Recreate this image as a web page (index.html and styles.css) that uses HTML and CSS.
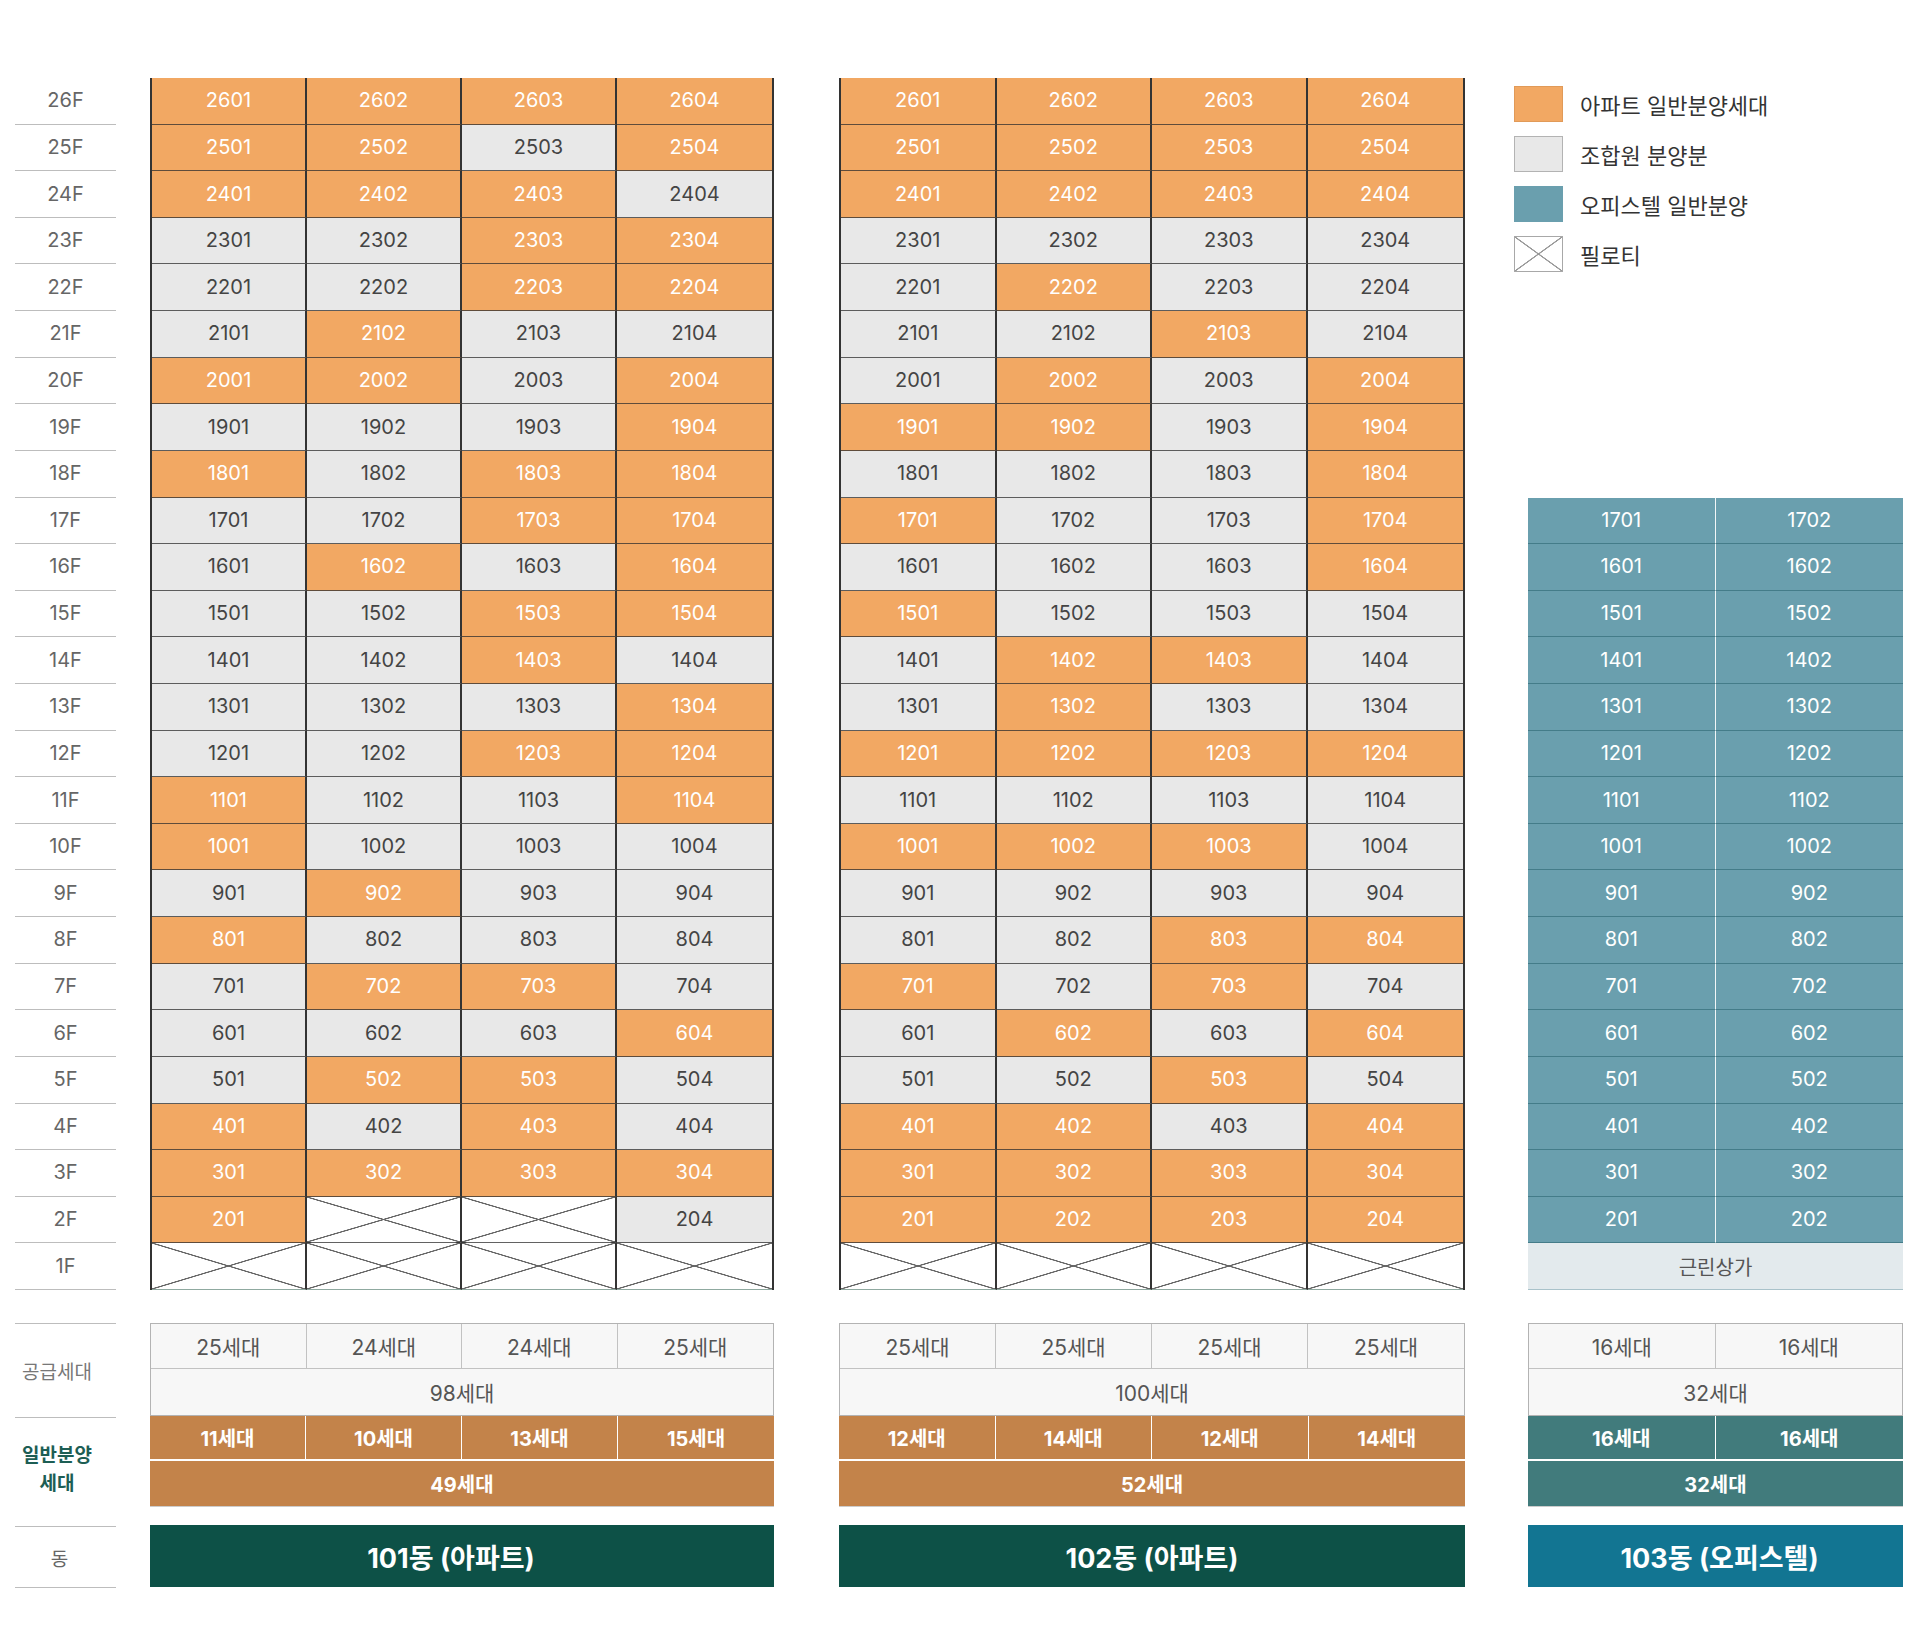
FILE: index.html
```html
<!DOCTYPE html>
<html lang="ko">
<head>
<meta charset="utf-8">
<title>동호배치도</title>
<link rel="stylesheet" href="styles.css">
</head>
<body>
<div class="page">
  <div class="top">
    <div class="floors">
      <div class="floor">26F</div><div class="floor">25F</div><div class="floor">24F</div><div class="floor">23F</div>
      <div class="floor">22F</div><div class="floor">21F</div><div class="floor">20F</div><div class="floor">19F</div>
      <div class="floor">18F</div><div class="floor">17F</div><div class="floor">16F</div><div class="floor">15F</div>
      <div class="floor">14F</div><div class="floor">13F</div><div class="floor">12F</div><div class="floor">11F</div>
      <div class="floor">10F</div><div class="floor">9F</div><div class="floor">8F</div><div class="floor">7F</div>
      <div class="floor">6F</div><div class="floor">5F</div><div class="floor">4F</div><div class="floor">3F</div>
      <div class="floor">2F</div><div class="floor">1F</div>
    </div>

    <div class="bldg b1">
      <div class="c o">2601</div><div class="c o">2602</div><div class="c o">2603</div><div class="c o">2604</div>
      <div class="c o">2501</div><div class="c o">2502</div><div class="c g">2503</div><div class="c o">2504</div>
      <div class="c o">2401</div><div class="c o">2402</div><div class="c o">2403</div><div class="c g">2404</div>
      <div class="c g">2301</div><div class="c g">2302</div><div class="c o">2303</div><div class="c o">2304</div>
      <div class="c g">2201</div><div class="c g">2202</div><div class="c o">2203</div><div class="c o">2204</div>
      <div class="c g">2101</div><div class="c o">2102</div><div class="c g">2103</div><div class="c g">2104</div>
      <div class="c o">2001</div><div class="c o">2002</div><div class="c g">2003</div><div class="c o">2004</div>
      <div class="c g">1901</div><div class="c g">1902</div><div class="c g">1903</div><div class="c o">1904</div>
      <div class="c o">1801</div><div class="c g">1802</div><div class="c o">1803</div><div class="c o">1804</div>
      <div class="c g">1701</div><div class="c g">1702</div><div class="c o">1703</div><div class="c o">1704</div>
      <div class="c g">1601</div><div class="c o">1602</div><div class="c g">1603</div><div class="c o">1604</div>
      <div class="c g">1501</div><div class="c g">1502</div><div class="c o">1503</div><div class="c o">1504</div>
      <div class="c g">1401</div><div class="c g">1402</div><div class="c o">1403</div><div class="c g">1404</div>
      <div class="c g">1301</div><div class="c g">1302</div><div class="c g">1303</div><div class="c o">1304</div>
      <div class="c g">1201</div><div class="c g">1202</div><div class="c o">1203</div><div class="c o">1204</div>
      <div class="c o">1101</div><div class="c g">1102</div><div class="c g">1103</div><div class="c o">1104</div>
      <div class="c o">1001</div><div class="c g">1002</div><div class="c g">1003</div><div class="c g">1004</div>
      <div class="c g">901</div><div class="c o">902</div><div class="c g">903</div><div class="c g">904</div>
      <div class="c o">801</div><div class="c g">802</div><div class="c g">803</div><div class="c g">804</div>
      <div class="c g">701</div><div class="c o">702</div><div class="c o">703</div><div class="c g">704</div>
      <div class="c g">601</div><div class="c g">602</div><div class="c g">603</div><div class="c o">604</div>
      <div class="c g">501</div><div class="c o">502</div><div class="c o">503</div><div class="c g">504</div>
      <div class="c o">401</div><div class="c g">402</div><div class="c o">403</div><div class="c g">404</div>
      <div class="c o">301</div><div class="c o">302</div><div class="c o">303</div><div class="c o">304</div>
      <div class="c o">201</div><div class="c x"></div><div class="c x"></div><div class="c g">204</div>
      <div class="c x f1"></div><div class="c x f1"></div><div class="c x f1"></div><div class="c x f1"></div>
    </div>

    <div class="bldg b2">
      <div class="c o">2601</div><div class="c o">2602</div><div class="c o">2603</div><div class="c o">2604</div>
      <div class="c o">2501</div><div class="c o">2502</div><div class="c o">2503</div><div class="c o">2504</div>
      <div class="c o">2401</div><div class="c o">2402</div><div class="c o">2403</div><div class="c o">2404</div>
      <div class="c g">2301</div><div class="c g">2302</div><div class="c g">2303</div><div class="c g">2304</div>
      <div class="c g">2201</div><div class="c o">2202</div><div class="c g">2203</div><div class="c g">2204</div>
      <div class="c g">2101</div><div class="c g">2102</div><div class="c o">2103</div><div class="c g">2104</div>
      <div class="c g">2001</div><div class="c o">2002</div><div class="c g">2003</div><div class="c o">2004</div>
      <div class="c o">1901</div><div class="c o">1902</div><div class="c g">1903</div><div class="c o">1904</div>
      <div class="c g">1801</div><div class="c g">1802</div><div class="c g">1803</div><div class="c o">1804</div>
      <div class="c o">1701</div><div class="c g">1702</div><div class="c g">1703</div><div class="c o">1704</div>
      <div class="c g">1601</div><div class="c g">1602</div><div class="c g">1603</div><div class="c o">1604</div>
      <div class="c o">1501</div><div class="c g">1502</div><div class="c g">1503</div><div class="c g">1504</div>
      <div class="c g">1401</div><div class="c o">1402</div><div class="c o">1403</div><div class="c g">1404</div>
      <div class="c g">1301</div><div class="c o">1302</div><div class="c g">1303</div><div class="c g">1304</div>
      <div class="c o">1201</div><div class="c o">1202</div><div class="c o">1203</div><div class="c o">1204</div>
      <div class="c g">1101</div><div class="c g">1102</div><div class="c g">1103</div><div class="c g">1104</div>
      <div class="c o">1001</div><div class="c o">1002</div><div class="c o">1003</div><div class="c g">1004</div>
      <div class="c g">901</div><div class="c g">902</div><div class="c g">903</div><div class="c g">904</div>
      <div class="c g">801</div><div class="c g">802</div><div class="c o">803</div><div class="c o">804</div>
      <div class="c o">701</div><div class="c g">702</div><div class="c o">703</div><div class="c g">704</div>
      <div class="c g">601</div><div class="c o">602</div><div class="c g">603</div><div class="c o">604</div>
      <div class="c g">501</div><div class="c g">502</div><div class="c o">503</div><div class="c g">504</div>
      <div class="c o">401</div><div class="c o">402</div><div class="c g">403</div><div class="c o">404</div>
      <div class="c o">301</div><div class="c o">302</div><div class="c o">303</div><div class="c o">304</div>
      <div class="c o">201</div><div class="c o">202</div><div class="c o">203</div><div class="c o">204</div>
      <div class="c x f1"></div><div class="c x f1"></div><div class="c x f1"></div><div class="c x f1"></div>
    </div>

    <div class="b3col">
      <ul class="legend">
        <li><span class="sw sw-o"></span>아파트 일반분양세대</li>
        <li><span class="sw sw-g"></span>조합원 분양분</li>
        <li><span class="sw sw-t"></span>오피스텔 일반분양</li>
        <li><span class="sw sw-x"></span>필로티</li>
      </ul>
      <div class="office">
        <div class="t">1701</div><div class="t">1702</div>
        <div class="t">1601</div><div class="t">1602</div>
        <div class="t">1501</div><div class="t">1502</div>
        <div class="t">1401</div><div class="t">1402</div>
        <div class="t">1301</div><div class="t">1302</div>
        <div class="t">1201</div><div class="t">1202</div>
        <div class="t">1101</div><div class="t">1102</div>
        <div class="t">1001</div><div class="t">1002</div>
        <div class="t">901</div><div class="t">902</div>
        <div class="t">801</div><div class="t">802</div>
        <div class="t">701</div><div class="t">702</div>
        <div class="t">601</div><div class="t">602</div>
        <div class="t">501</div><div class="t">502</div>
        <div class="t">401</div><div class="t">402</div>
        <div class="t">301</div><div class="t">302</div>
        <div class="t">201</div><div class="t">202</div>
        <div class="shop">근린상가</div>
      </div>
    </div>
  </div>

  <div class="bottom">
    <div class="labels">
      <div class="lab lab1">공급세대</div>
      <div class="lab lab2">일반분양<br>세대</div>
      <div class="lab lab3">동</div>
    </div>

    <div class="sum b1">
      <div class="supply">
        <div class="srow"><div>25세대</div><div>24세대</div><div>24세대</div><div>25세대</div></div>
        <div class="stotal">98세대</div>
      </div>
      <div class="gen gen-o">
        <div class="grow"><div>11세대</div><div>10세대</div><div>13세대</div><div>15세대</div></div>
        <div class="gtotal">49세대</div>
      </div>
      <div class="dong dong-g dong-101">101동 (아파트)</div>
    </div>

    <div class="sum b2">
      <div class="supply">
        <div class="srow"><div>25세대</div><div>25세대</div><div>25세대</div><div>25세대</div></div>
        <div class="stotal">100세대</div>
      </div>
      <div class="gen gen-o">
        <div class="grow"><div>12세대</div><div>14세대</div><div>12세대</div><div>14세대</div></div>
        <div class="gtotal">52세대</div>
      </div>
      <div class="dong dong-g">102동 (아파트)</div>
    </div>

    <div class="sum b3">
      <div class="supply">
        <div class="srow two"><div>16세대</div><div>16세대</div></div>
        <div class="stotal">32세대</div>
      </div>
      <div class="gen gen-t">
        <div class="grow two"><div>16세대</div><div>16세대</div></div>
        <div class="gtotal">32세대</div>
      </div>
      <div class="dong dong-b dong-103">103동 (오피스텔)</div>
    </div>
  </div>
</div>
</body>
</html>
```

FILE: styles.css
```css
* { box-sizing: border-box; margin: 0; padding: 0; }

body {
  background: #fff;
  font-family: Inter, "Noto Sans CJK KR", "Noto Sans", sans-serif;
  width: 1920px;
  height: 1634px;
  overflow: hidden;
}

.page { padding: 78px 0 0 15px; }

/* ---------- top: floors + buildings ---------- */
.top { display: flex; height: 1212px; }

.floors {
  width: 101px;
  display: grid;
  grid-template-rows: repeat(26, 1fr);
}
.floor {
  display: flex;
  align-items: center;
  justify-content: center;
  border-bottom: 1px solid #bdbdbd;
  font-size: 20px;
  color: #666;
  padding-bottom: 1px;
}

.b1 { width: 624px; margin-left: 34px; }
.b2 { width: 626px; margin-left: 65px; }
.b3 { width: 375px; margin-left: 63px; }

.bldg {
  display: grid;
  grid-template-columns: repeat(4, 1fr);
  grid-template-rows: repeat(26, 1fr);
  border-left: 2px solid #333;
  border-right: 2px solid #333;
}

.c {
  display: flex;
  align-items: center;
  justify-content: center;
  font-size: 20px;
  padding-bottom: 1px;
  border-bottom: 1px solid rgba(45, 45, 45, 0.75);
  border-right: 2px solid #333;
}
.c:nth-child(4n) { border-right: none; }

.o { background: #f2a863; color: #fff; }
.g { background: #e8e8e8; color: #444; }
.x {
  background-color: #fff;
  background-image:
    linear-gradient(to top right, transparent calc(50% - 0.9px), #666 calc(50% - 0.4px), #666 calc(50% + 0.4px), transparent calc(50% + 0.9px)),
    linear-gradient(to bottom right, transparent calc(50% - 0.9px), #666 calc(50% - 0.4px), #666 calc(50% + 0.4px), transparent calc(50% + 0.9px));
}
.f1 { border-bottom: 1px solid #8fa9a0; }

/* ---------- building 103 column ---------- */
.b3col {
  width: 375px;
  margin-left: 63px;
  display: flex;
  flex-direction: column;
}

.legend {
  list-style: none;
  margin-left: -14px;
  padding-top: 8px;
  display: flex;
  flex-direction: column;
  gap: 14px;
}
.legend li {
  display: flex;
  align-items: center;
  gap: 17px;
  font-size: 22px;
  color: #333;
  height: 36px;
}
.sw { width: 49px; height: 36px; display: block; border: 1px solid #aaa; }
.sw-o { background: #f2a863; border-color: #e19a58; }
.sw-g { background: #e8e8e8; border-color: #b3b3b3; }
.sw-t { background: #6a9fae; border-color: #6a9fae; }
.sw-x {
  background-color: #fff;
  border-color: #a8a8a8;
  background-image:
    linear-gradient(to top right, transparent calc(50% - 0.9px), #999 calc(50% - 0.4px), #999 calc(50% + 0.4px), transparent calc(50% + 0.9px)),
    linear-gradient(to bottom right, transparent calc(50% - 0.9px), #999 calc(50% - 0.4px), #999 calc(50% + 0.4px), transparent calc(50% + 0.9px));
}

.office {
  margin-top: auto;
  height: calc(1212px * 17 / 26);
  display: grid;
  grid-template-columns: 1fr 1fr;
  grid-template-rows: repeat(17, 1fr);
}
.t {
  display: flex;
  align-items: center;
  justify-content: center;
  background: #6a9fae;
  color: #fff;
  font-size: 20px;
  padding-bottom: 1px;
  border-bottom: 1px solid #447c89;
}
.t:nth-child(odd) { border-right: 1px solid #f2f6f7; }
.shop {
  grid-column: 1 / 3;
  display: flex;
  align-items: center;
  justify-content: center;
  font-size: 20px;
  color: #555;
  background:
    linear-gradient(to right, transparent calc(50% - 1px), rgba(255,255,255,0.85) calc(50% - 1px), rgba(255,255,255,0.85) 50%, transparent 50%),
    #e3eaed;
  border-bottom: 1px solid #a9c2ca;
}

/* ---------- bottom summaries ---------- */
.bottom { display: flex; margin-top: 33px; }

.labels { width: 101px; display: flex; flex-direction: column; }
.lab {
  display: flex;
  align-items: center;
  justify-content: center;
  text-align: center;
  border-top: 1px solid #bdbdbd;
  font-size: 19px;
  color: #777;
  padding-right: 17px;
}
.lab1 { height: 94px; }
.lab2 { height: 109px; color: #1d5e54; font-weight: 700; line-height: 28px; padding-bottom: 4px; }
.lab3 { height: 62px; border-bottom: 1px solid #bdbdbd; color: #666; padding-right: 12px; }

.sum { display: flex; flex-direction: column; }

.supply {
  border: 1px solid #b3b3b3;
  background: #f7f7f7;
  color: #555;
  font-size: 21px;
}
.srow { display: grid; grid-template-columns: repeat(4, 1fr); height: 44px; }
.srow.two { grid-template-columns: 1fr 1fr; }
.srow > div {
  display: flex;
  align-items: center;
  justify-content: center;
  border-right: 1px solid #c2c2c2;
}
.srow > div:last-child { border-right: none; }
.stotal {
  height: 47px;
  border-top: 1px solid #c2c2c2;
  display: flex;
  align-items: center;
  justify-content: center;
}

.gen { color: #fff; font-size: 20px; font-weight: 700; }
.gen-o { background: #c3834a; }
.gen-t { background: #417b7c; }
.grow { display: grid; grid-template-columns: repeat(4, 1fr); height: 45px; border-bottom: 2px solid #fff; }
.grow.two { grid-template-columns: 1fr 1fr; }
.grow > div {
  display: flex;
  align-items: center;
  justify-content: center;
  border-right: 1px solid #fff;
}
.grow > div:last-child { border-right: none; }
.gtotal {
  height: 46px;
  display: flex;
  align-items: center;
  justify-content: center;
  border-bottom: 1px solid #ccc;
}

.dong {
  margin-top: 18px;
  height: 62px;
  display: flex;
  align-items: center;
  justify-content: center;
  color: #fff;
  font-size: 27px;
  font-weight: 700;
}
.dong-g { background: #0d5147; }
.dong-b { background: #127592; }
.dong-101 { padding-right: 22px; }
.dong-103 { padding-left: 8px; }
```
